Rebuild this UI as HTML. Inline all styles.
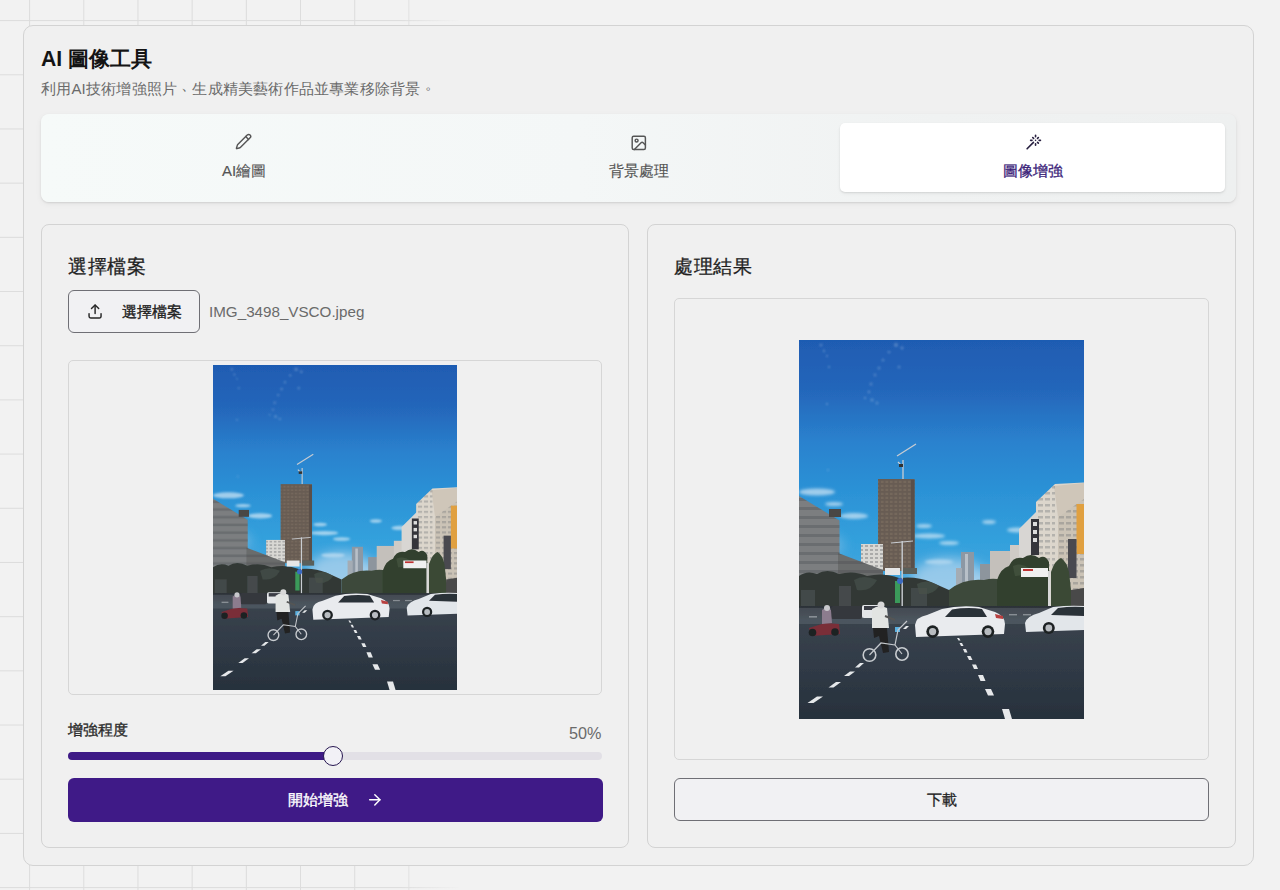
<!DOCTYPE html>
<html><head><meta charset="utf-8">
<style>
*{box-sizing:border-box;margin:0;padding:0}
html,body{width:1280px;height:890px;overflow:hidden;background:#f2f2f2;font-family:"Liberation Sans",sans-serif}
.abs{position:absolute}
#grid{position:absolute;left:0;top:0;width:470px;height:890px;
background-image:linear-gradient(to right,#dcdcdc 1px,transparent 1px),linear-gradient(to bottom,#dcdcdc 1px,transparent 1px);
background-size:54.2px 54.2px;background-position:29.1px 20.1px;
-webkit-mask-image:linear-gradient(to right,#000 0,#000 400px,transparent 461px)}
#card{position:absolute;left:23px;top:25px;width:1230.5px;height:841px;border:1px solid #d3d3d3;border-radius:10px;background:#f0f0f0}
.t{position:absolute;white-space:nowrap;line-height:1}
#tabs{position:absolute;left:41px;top:113.5px;width:1194.6px;height:88px;border-radius:8px;background:linear-gradient(to right,#f6faf9 0%,#f4f7f7 45%,#f0f2f2 75%,#eef0f0 100%);box-shadow:0 1px 2px rgba(0,0,0,.10),0 2px 6px rgba(0,0,0,.05)}
.tab{position:absolute;top:9.2px;width:385px;height:69px;border-radius:5px}
.tab.active{background:#fff;box-shadow:0 1px 2px rgba(0,0,0,.10),0 2px 4px rgba(0,0,0,.04)}
.panel{position:absolute;top:223.5px;width:588px;height:624px;border:1px solid #d3d3d3;border-radius:8px;background:#f0f0f0}
.btn{position:absolute;border:1px solid #6f6f75;border-radius:6px;background:#f1f1f3}
.prev{position:absolute;border:1px solid #d6d6d6;border-radius:5px;background:#f0f0f0}
svg.ic{position:absolute;fill:none;stroke-linecap:round;stroke-linejoin:round}
</style></head>
<body>
<div id="grid"></div>
<div id="card"></div>

<div class="t" style="left:41px;top:48px;font-size:21.2px;font-weight:700;color:#141414">AI 圖像工具</div>
<div class="t" style="left:41px;top:81px;font-size:15px;letter-spacing:0.2px;color:#6a6a6a">利用AI技術增強照片<span style="position:relative;left:4px;top:-4.5px">、</span>生成精美藝術作品並專業移除背景<span style="position:relative;left:4.5px;top:-5px">。</span></div>

<div id="tabs">
  <div class="tab active" style="left:799px"></div>
</div>
<!-- tab icons -->
<svg class="ic" style="left:235.2px;top:133.3px;stroke:#555" width="17.1" height="17.1" viewBox="0 0 24 24" stroke-width="2"><path d="M21.174 6.812a1 1 0 0 0-3.986-3.987L3.842 16.174a2 2 0 0 0-.5.83l-1.321 4.352a.5.5 0 0 0 .623.622l4.353-1.32a2 2 0 0 0 .83-.497z"/><path d="m15 5 4 4"/></svg>
<div class="t" style="left:222px;top:163px;font-size:15px;-webkit-text-stroke:0.15px #555;color:#555">AI繪圖</div>
<svg class="ic" style="left:629.6px;top:133.5px;stroke:#555" width="17.6" height="17.6" viewBox="0 0 24 24" stroke-width="2"><rect width="18" height="18" x="3" y="3" rx="2" ry="2"/><circle cx="9" cy="9" r="2"/><path d="m21 15-3.086-3.086a2 2 0 0 0-2.828 0L6 21"/></svg>
<div class="t" style="left:609px;top:163px;font-size:15px;-webkit-text-stroke:0.15px #555;color:#555">背景處理</div>
<svg class="ic" style="left:1024.9px;top:134.1px;stroke:#282040" width="16.9" height="16.9" viewBox="0 0 24 24" stroke-width="2.3"><path d="M15 4V2"/><path d="M15 16v-2"/><path d="M8 9h2"/><path d="M20 9h2"/><path d="M17.8 11.8 19 13"/><path d="M15 9h0"/><path d="M17.8 6.2 19 5"/><path d="m3 21 9-9"/><path d="M12.2 6.2 11 5"/></svg>
<div class="t" style="left:1003px;top:163px;font-size:15px;-webkit-text-stroke:0.3px #3a1c78;color:#3a1c78">圖像增強</div>

<!-- left panel -->
<div class="panel" style="left:41px"></div>
<div class="t" style="left:68px;top:257.2px;font-size:19px;letter-spacing:0.6px;-webkit-text-stroke:0.3px #1f1f1f;color:#1f1f1f">選擇檔案</div>
<div class="btn" style="left:68px;top:290px;width:132px;height:42.5px"></div>
<svg class="ic" style="left:84px;top:300px;stroke:#262626" width="22" height="22" viewBox="0 0 22 22" stroke-width="1.45"><path d="M11.1 5.2V13.6"/><path d="M7.5 8.6 11.1 5 14.7 8.6"/><path d="M5.05 13.6V16.3a1.6 1.6 0 0 0 1.6 1.6H15.45a1.6 1.6 0 0 0 1.6-1.6V13.6"/></svg>
<div class="t" style="left:121.5px;top:304px;font-size:15px;-webkit-text-stroke:0.35px #222;color:#222">選擇檔案</div>
<div class="t" style="left:209px;top:304px;font-size:15.2px;color:#6a6a6a">IMG_3498_VSCO.jpeg</div>
<div class="prev" style="left:67.8px;top:359.5px;width:534.5px;height:335.5px"></div>
<svg class="abs" style="left:212.7px;top:365px" width="244.3" height="325" viewBox="0 0 285 379" preserveAspectRatio="none"><use href="#photo"/></svg>

<div class="t" style="left:68px;top:722px;font-size:15px;-webkit-text-stroke:0.35px #2a2a2a;color:#2a2a2a">增強程度</div>
<div class="t" style="left:569px;top:725px;font-size:16.2px;color:#6a6a6a">50%</div>
<div class="abs" style="left:68px;top:752px;width:534px;height:8.2px;border-radius:5px;background:#e2e0e6"></div>
<div class="abs" style="left:68px;top:752px;width:266px;height:8.2px;border-radius:5px;background:#3e1a86"></div>
<div class="abs" style="left:322.7px;top:745.7px;width:20.8px;height:20.8px;border-radius:50%;background:#f2f1f6;border:1.9px solid #261650"></div>
<div class="abs" style="left:68px;top:778px;width:534.5px;height:43.5px;border-radius:6px;background:#3f1a87"></div>
<div class="t" style="left:288.3px;top:792px;font-size:15px;-webkit-text-stroke:0.35px #fff;color:#fff">開始增強</div>
<svg class="ic" style="left:365.6px;top:791.2px;stroke:#fff" width="17.6" height="17.6" viewBox="0 0 24 24" stroke-width="2"><path d="M5 12h14"/><path d="m12 5 7 7-7 7"/></svg>

<!-- right panel -->
<div class="panel" style="left:647.2px;width:589px"></div>
<div class="t" style="left:674.3px;top:257.2px;font-size:19px;letter-spacing:0.6px;-webkit-text-stroke:0.3px #1f1f1f;color:#1f1f1f">處理結果</div>
<div class="prev" style="left:673.8px;top:298px;width:535px;height:462px"></div>
<svg class="abs" style="left:799px;top:340px" width="285" height="379" viewBox="0 0 285 379" preserveAspectRatio="none"><use href="#photo"/></svg>
<div class="btn" style="left:674px;top:778px;width:535px;height:43.3px"></div>
<div class="t" style="left:926.5px;top:792px;font-size:15px;-webkit-text-stroke:0.3px #222;color:#222">下載</div>

<svg width="0" height="0" style="position:absolute">
<defs>
<linearGradient id="sky" x1="0" y1="0" x2="0" y2="1">
<stop offset="0" stop-color="#1f5cb2"/><stop offset="0.13" stop-color="#2466ba"/><stop offset="0.27" stop-color="#2a82ce"/><stop offset="0.4" stop-color="#2c92d6"/><stop offset="0.53" stop-color="#32a0dc"/><stop offset="0.62" stop-color="#44a6de"/><stop offset="0.7" stop-color="#78bce4"/><stop offset="1" stop-color="#8cc4e6"/>
</linearGradient>
<linearGradient id="road" x1="0" y1="0" x2="0" y2="1">
<stop offset="0" stop-color="#2c3238"/><stop offset="0.12" stop-color="#3a434d"/><stop offset="0.5" stop-color="#313b47"/><stop offset="1" stop-color="#27313c"/>
</linearGradient>
<pattern id="winds" width="4.5" height="4" patternUnits="userSpaceOnUse"><rect width="4.5" height="4" fill="#62574e"/><rect x="0.8" y="0.8" width="3" height="2.2" fill="#7a6c60"/></pattern>
<pattern id="winds2" width="5" height="4" patternUnits="userSpaceOnUse"><rect x="1" y="1" width="3" height="2" fill="#55585c"/></pattern>
<pattern id="winds3" width="7" height="6" patternUnits="userSpaceOnUse"><rect x="1" y="2" width="5" height="2.5" fill="#6a6e72"/></pattern>
<pattern id="bands" width="6" height="9" patternUnits="userSpaceOnUse"><rect x="0" y="5" width="6" height="3" fill="#3e4144"/></pattern>
<filter id="soft" x="0" y="0" width="1" height="1"><feGaussianBlur stdDeviation="0.5"/></filter>
<filter id="blur1" x="-50%" y="-50%" width="200%" height="200%"><feGaussianBlur stdDeviation="1"/></filter>
<filter id="blur2" x="-50%" y="-50%" width="200%" height="200%"><feGaussianBlur stdDeviation="1.4"/></filter>
<filter id="blur3" x="-50%" y="-50%" width="200%" height="200%"><feGaussianBlur stdDeviation="6"/></filter>
<symbol id="photo" viewBox="0 0 285 379">
<g filter="url(#soft)">
<rect width="285" height="379" fill="url(#sky)"/>
<!-- faint clouds top-left -->
<g fill="#e0ecf8" opacity="0.22" filter="url(#blur1)">
<circle cx="22" cy="5" r="1.6"/><circle cx="25" cy="11" r="1.4"/><circle cx="28" cy="16" r="1.2"/><circle cx="30" cy="27" r="1.2"/>
<circle cx="97" cy="5" r="2.2"/><circle cx="103" cy="8" r="1.8"/><circle cx="90" cy="12" r="1.6"/><circle cx="84" cy="20" r="1.5"/>
<circle cx="80" cy="28" r="1.6"/><circle cx="76" cy="35" r="1.4"/><circle cx="72" cy="44" r="1.5"/><circle cx="70" cy="52" r="1.4"/>
<circle cx="73" cy="60" r="1.8"/><circle cx="78" cy="63" r="1.5"/><circle cx="66" cy="58" r="1.2"/><circle cx="100" cy="27" r="1.5"/>
<circle cx="28" cy="64" r="1.2"/><circle cx="29" cy="130" r="1"/>
</g>
<!-- haze clouds -->
<g fill="#eef5fb" opacity="0.6" filter="url(#blur2)">
<ellipse cx="18" cy="152" rx="18" ry="3.5"/><ellipse cx="55" cy="176" rx="14" ry="3"/><ellipse cx="35" cy="164" rx="9" ry="2"/>
<ellipse cx="130" cy="196" rx="16" ry="2.5"/><ellipse cx="125" cy="186" rx="8" ry="2"/><ellipse cx="150" cy="203" rx="10" ry="2"/>
<ellipse cx="218" cy="190" rx="10" ry="2.5"/><ellipse cx="190" cy="182" rx="7" ry="2"/><ellipse cx="140" cy="222" rx="14" ry="2.5"/>
</g>
<g filter="url(#blur3)"><ellipse cx="150" cy="240" rx="38" ry="22" fill="#b0d4ee" opacity="0.75"/><ellipse cx="200" cy="245" rx="30" ry="14" fill="#b8d8ee" opacity="0.6"/><ellipse cx="20" cy="205" rx="25" ry="12" fill="#9cc8ea" opacity="0.5"/></g>
<!-- far towers -->
<rect x="162" y="212" width="13" height="42" fill="#8c98a4"/>
<rect x="166" y="214" width="3" height="38" fill="#b8c0c8"/>
<rect x="157" y="228" width="6" height="27" fill="#a4acb4"/>
<rect x="181" y="224" width="11" height="24" fill="#8d959d"/>
<rect x="191" y="211" width="21" height="36" fill="#c4c0bb"/>
<rect x="211" y="205" width="10" height="40" fill="#cfcbc6"/>
<!-- crane -->
<path d="M104 139 L104 120 M98 116 L117 104 M99 122 L104 127" stroke="#c8ccd2" stroke-width="1.3" fill="none"/>
<rect x="100" y="124" width="4" height="3" fill="#333"/>
<!-- tower -->
<rect x="79" y="139" width="36.5" height="92" fill="#6d6157"/>
<rect x="79" y="139" width="36.5" height="92" fill="url(#winds)" opacity=".55"/>
<rect x="112" y="140" width="3.5" height="90" fill="#5a5048"/>
<!-- white building center -->
<rect x="62" y="204" width="22" height="26" fill="#d9d8d4"/>
<rect x="62" y="204" width="22" height="26" fill="url(#winds2)" opacity=".35"/>
<!-- left building -->
<path d="M0 156 L40.5 180.5 L40.5 268 L0 268 Z" fill="#7b7e80"/>
<path d="M0 156 L40.5 180.5 L40.5 268 L0 268 Z" fill="url(#bands)" opacity=".28"/>
<path d="M39 213 L84 230 L84 266 L39 266 Z" fill="#6a6c6c"/>
<path d="M39 213 L84 230 L84 266 L39 266 Z" fill="url(#bands)" opacity=".25"/>
<rect x="30" y="169" width="12" height="8" fill="#4a4644"/>
<!-- right buildings -->
<path d="M237 162 L256 144 L285 142.5 L285 270 L237 270 Z" fill="#dcd6cc"/>
<path d="M255 146 L285 143 L285 160 L259 177 Z" fill="#cfc6b9"/>
<path d="M259 177 L285 159 L285 270 L259 270 Z" fill="#cbc3b6"/>
<path d="M237 162 L256 144 L256 270 L237 270 Z" fill="url(#winds3)" opacity=".35"/>
<path d="M259 177 L285 159 L285 270 L259 270 Z" fill="url(#winds3)" opacity=".35"/>
<path d="M220 189 L238 171 L238 268 L220 268 Z" fill="#d8d6d3"/>
<rect x="232" y="179" width="8" height="36" fill="#34343a"/>
<rect x="234" y="182" width="4" height="4" fill="#ddd"/><rect x="234" y="190" width="4" height="4" fill="#ddd"/><rect x="234" y="198" width="4" height="4" fill="#ddd"/>
<rect x="277.5" y="164" width="7.5" height="50" fill="#e0a040"/>
<rect x="269" y="199" width="8.5" height="39" fill="#4a4a50"/>
<!-- trees -->
<path d="M0 236 Q8 230 18 234 Q28 228 40 234 Q55 230 68 236 Q85 232 100 238 Q118 236 132 242 L150 250 L150 272 L0 272 Z" fill="#323936"/>
<rect x="2" y="250" width="14" height="16" fill="#4a4e50" opacity=".7"/>
<rect x="40" y="246" width="12" height="20" fill="#50555a" opacity=".6"/>
<rect x="112" y="248" width="16" height="18" fill="#4e5456" opacity=".6"/>
<path d="M55 240 Q65 234 78 240 Q72 252 58 250 Z" fill="#46504a" opacity=".7"/>
<path d="M118 244 Q128 238 140 246 Q134 256 120 254 Z" fill="#47524a" opacity=".7"/>
<path d="M150 250 Q165 238 185 240 Q200 236 208 244 L208 272 L150 272 Z" fill="#3d4a3a"/>
<path d="M198 240 Q202 228 210 226 Q214 216 224 218 Q232 212 240 218 Q246 214 250 222 L250 272 L198 272 Z" fill="#33412f"/>
<path d="M252 232 Q256 220 262 218 Q268 222 270 232 L272 250 Q276 262 270 272 L252 272 Z" fill="#3a4a36"/>
<path d="M214 226 Q222 222 230 228 Q226 236 216 236 Z" fill="#4a5a44" opacity=".6"/>
<path d="M272 250 L285 248 L285 272 L272 272 Z" fill="#4a4a4a"/>
<!-- poles / signs -->
<rect x="102.5" y="201" width="1.4" height="70" fill="#c9cdd2"/>
<path d="M92 203 L114 201" stroke="#c9cdd2" stroke-width="1"/>
<rect x="86" y="228" width="15" height="7" fill="#e6e6e6"/>
<rect x="104" y="228" width="14" height="6" fill="#5a5e5a"/>
<rect x="96" y="241" width="5" height="22" fill="#3a9a5a"/>
<circle cx="101" cy="241" r="3" fill="#3a6ac0"/>
<rect x="222" y="228" width="27" height="9" fill="#f0f0f0"/>
<rect x="224" y="229" width="10" height="2" fill="#c03030"/>
<rect x="249" y="231" width="2.5" height="40" fill="#d8d8d8"/>
<!-- road -->
<rect x="0" y="266" width="285" height="113" fill="url(#road)"/>
<rect x="0" y="268" width="285" height="16" fill="#6e767f" opacity=".35"/>
<g fill="#c8ccd0" opacity=".5"><rect x="10" y="276" width="8" height="1.6"/><rect x="24" y="276" width="8" height="1.6"/><rect x="40" y="276" width="8" height="1.6"/><rect x="56" y="276" width="8" height="1.6"/><rect x="210" y="274" width="8" height="1.4"/><rect x="224" y="274" width="8" height="1.4"/></g>
<!-- back cars -->
<rect x="32" y="266" width="31" height="13" rx="2" fill="#34373c"/>
<rect x="63" y="265" width="19" height="13" rx="2" fill="#e4e6e8"/>
<rect x="65" y="266" width="14" height="4" fill="#3a3e44"/>
<!-- center car -->
<path d="M116 285 Q117 277 128 275 L143 269 Q160 265 180 267 L196 272 Q206 276 206 284 L205 294 L117 297 Z" fill="#e9ebee"/>
<path d="M146 277 L153 269.5 Q168 267 183 269 L188 277 Z" fill="#2c3038"/>
<path d="M196 274 L204 276 L204 279 L197 278 Z" fill="#b84040"/>
<circle cx="133.6" cy="291.6" r="6.3" fill="#1e2024"/><circle cx="189" cy="291.6" r="6.3" fill="#1e2024"/>
<circle cx="133.6" cy="291.6" r="3.6" fill="#b8bcc0"/><circle cx="189" cy="291.6" r="3.6" fill="#b8bcc0"/>
<!-- right car -->
<path d="M226 283 Q228 276 240 273 L254 267 Q270 265 285 266 L285 290 L227 292 Z" fill="#e2e6ea"/>
<path d="M252 275 L259 268 Q272 266 285 267 L285 276 Z" fill="#2c3038"/>
<circle cx="249.8" cy="288" r="6" fill="#1e2024"/><circle cx="249.8" cy="288" r="3.4" fill="#b8bcc0"/>
<!-- motorbike -->
<path d="M10 288 L26 283 L40 284 L41 294 L12 296 Z" fill="#7a2d38"/>
<circle cx="13.5" cy="292.5" r="3.8" fill="#1e2024"/><circle cx="36" cy="292" r="3.8" fill="#1e2024"/>
<path d="M23 270 Q28 266 32 270 L33 283 L23 284 Z" fill="#8c7c8e"/>
<circle cx="28" cy="268" r="3" fill="#c8c8cc"/>
<!-- cyclist -->
<path d="M73 269 Q80 264 88 268 L90 288 L73 288 Z" fill="#e2e4e2"/>
<path d="M74 288 L88 288 L90 312 L84 313 L80 296 L75 298 Z" fill="#222"/>
<circle cx="82" cy="265" r="3.5" fill="#d8d8d8"/>
<path d="M86 276 L96 280" stroke="#555" stroke-width="2"/>
<rect x="96" y="287" width="5" height="5" fill="#5ab0e0"/>
<circle cx="70.5" cy="315" r="6.3" fill="none" stroke="#c8ccd0" stroke-width="1.6"/>
<circle cx="103" cy="314" r="6.2" fill="none" stroke="#c8ccd0" stroke-width="1.6"/>
<path d="M70.5 315 L82 303 L96 305 L103 314 M96 305 L99 290 L108 281" stroke="#c4c8cc" stroke-width="1.2" fill="none"/>
<!-- lane dashes -->
<g fill="#e6e8ea">
<path d="M61 323 L65 323 L60 327.5 L56 327.5 Z"/>
<path d="M51 331.5 L56 331.5 L50 336 L45 336 Z"/>
<path d="M37 342 L42 342 L34.5 347.5 L29.5 347.5 Z"/>
<path d="M18 356.5 L24 356.5 L14.5 363 L8.5 363 Z"/>
<path d="M107 286 L110 286 L107 289 L104 289 Z"/>
<path d="M158 298 L160 298 L161.5 300.5 L159.5 300.5 Z"/>
<path d="M160.5 303 L163 303 L164.5 306 L162 306 Z"/>
<path d="M164 309 L167 309 L168.5 312.5 L165.5 312.5 Z"/>
<path d="M168 316 L171.5 316 L173.5 320 L170 320 Z"/>
<path d="M173 324.5 L177 324.5 L179 329 L175 329 Z"/>
<path d="M179 335 L184 335 L186.5 341 L181.5 341 Z"/>
<path d="M186 349 L192 349 L195 355.5 L189 355.5 Z"/>
<path d="M203 369 L210 369 L213 379 L206 379 Z"/>
</g>
</g>
</symbol>
</defs>
</svg>
</body></html>
